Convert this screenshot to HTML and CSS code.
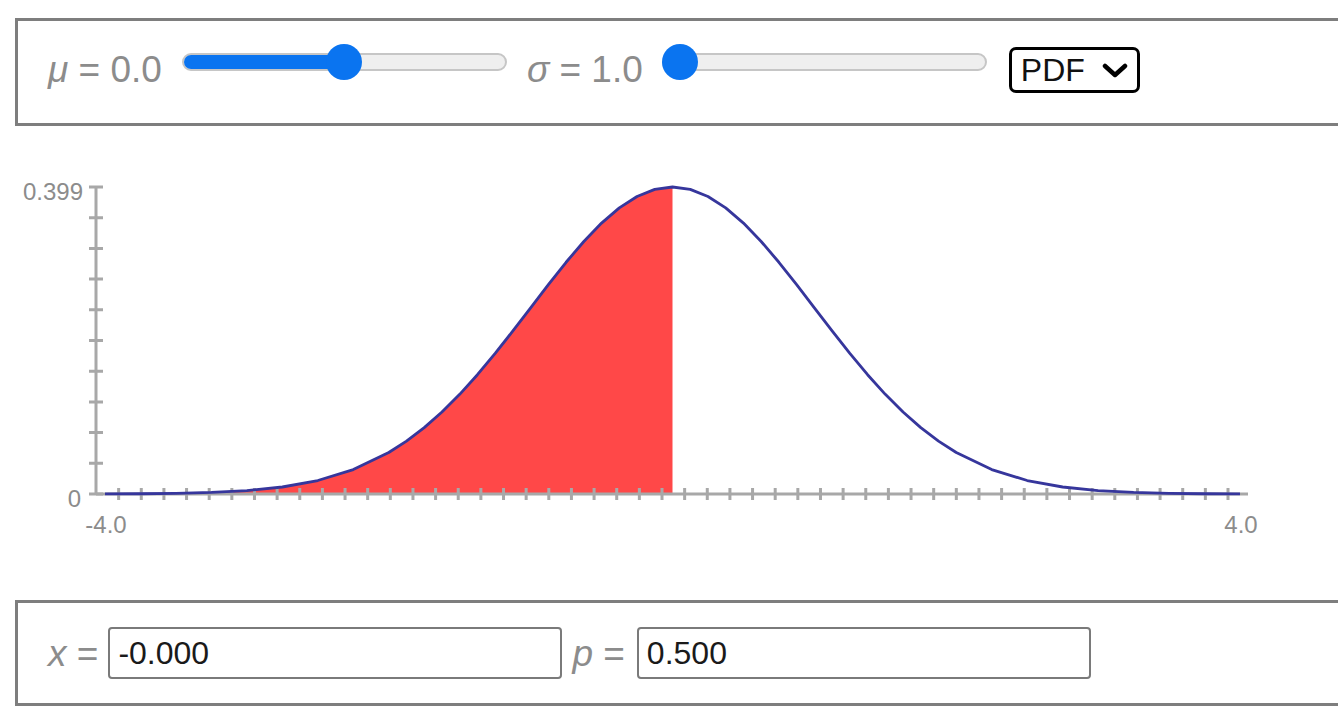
FILE: index.html
```html
<!DOCTYPE html>
<html lang="en">
<head>
<meta charset="utf-8">
<title>Normal distribution</title>
<link rel="stylesheet" href="styles.css">
</head>
<body>
<div class="panel controls">
  <span class="label lab-mu"><i>μ</i> = 0.0</span>
  <div class="slider" role="slider" aria-valuenow="0">
    <div class="track"><div class="fill" style="width:50%"></div></div>
    <div class="thumb" style="left:144.5px"></div>
  </div>
  <span class="label lab-sigma"><i>σ</i> = 1.0</span>
  <div class="slider" role="slider" aria-valuenow="1">
    <div class="track"><div class="fill" style="width:0%"></div></div>
    <div class="thumb" style="left:0px"></div>
  </div>
  <div class="select-wrap">
    <select class="mode">
      <option>PDF</option>
      <option>CDF</option>
    </select>
    <svg class="chev" width="28" height="16" viewBox="0 0 28 16"><path d="M4 3 L14 12 L24 3" fill="none" stroke="#000" stroke-width="4.5" stroke-linecap="round" stroke-linejoin="round"/></svg>
  </div>
</div>

<svg class="chart" width="1338" height="474" viewBox="0 0 1338 474">
  <polygon class="area" points="105,368 105,367.90 140.47,367.73 175.94,367.33 211.41,366.44 246.88,364.59 282.34,361.00 317.81,354.51 353.28,343.58 388.75,326.45 406.48,315.07 424.22,301.61 441.95,286.01 459.69,268.33 477.42,248.71 495.16,227.45 512.89,204.95 530.63,181.80 548.36,158.64 566.09,136.26 583.83,115.47 601.56,97.07 619.30,81.84 637.03,70.45 654.77,63.39 672.5,61 672.5,368"/>
  <line class="axis" x1="96" y1="61" x2="96" y2="368"/>
  <line class="axis" x1="96" y1="368" x2="1248" y2="368"/>
  <path class="tick" d="M89 61H103M89 91.7H103M89 122.4H103M89 153.1H103M89 183.8H103M89 214.5H103M89 245.2H103M89 275.9H103M89 306.6H103M89 337.3H103M89 368H103"/>
  <path class="tick" d="M118.64 362V374M141.28 362V374M163.92 362V374M186.56 362V374M209.2 362V374M231.84 362V374M254.48 362V374M277.12 362V374M299.76 362V374M322.4 362V374M345.04 362V374M367.68 362V374M390.32 362V374M412.96 362V374M435.6 362V374M458.24 362V374M480.88 362V374M503.52 362V374M526.16 362V374M548.8 362V374M571.44 362V374M594.08 362V374M616.72 362V374M639.36 362V374M662 362V374M684.64 362V374M707.28 362V374M729.92 362V374M752.56 362V374M775.2 362V374M797.84 362V374M820.48 362V374M843.12 362V374M865.76 362V374M888.4 362V374M911.04 362V374M933.68 362V374M956.32 362V374M978.96 362V374M1001.6 362V374M1024.24 362V374M1046.88 362V374M1069.52 362V374M1092.16 362V374M1114.8 362V374M1137.44 362V374M1160.08 362V374M1182.72 362V374M1205.36 362V374M1228 362V374"/>
  <polyline class="curve" points="105,367.90 140.47,367.73 175.94,367.33 211.41,366.44 246.88,364.59 282.34,361.00 317.81,354.51 353.28,343.58 388.75,326.45 406.48,315.07 424.22,301.61 441.95,286.01 459.69,268.33 477.42,248.71 495.16,227.45 512.89,204.95 530.63,181.80 548.36,158.64 566.09,136.26 583.83,115.47 601.56,97.07 619.30,81.84 637.03,70.45 654.77,63.39 672.5,61 690.23,63.39 707.97,70.45 725.70,81.84 743.44,97.07 761.17,115.47 778.91,136.26 796.64,158.64 814.38,181.80 832.11,204.95 849.84,227.45 867.58,248.71 885.31,268.33 903.05,286.01 920.78,301.61 938.52,315.07 956.25,326.45 991.72,343.58 1027.19,354.51 1062.66,361.00 1098.13,364.59 1133.59,366.44 1169.06,367.33 1204.53,367.73 1240,367.90"/>
  <text class="axlabel" x="83" y="74" text-anchor="end">0.399</text>
  <text class="axlabel" x="81" y="381" text-anchor="end">0</text>
  <text class="axlabel" x="106" y="407" text-anchor="middle">-4.0</text>
  <text class="axlabel" x="1241" y="407" text-anchor="middle">4.0</text>
</svg>

<div class="panel values">
  <span class="label lab-x"><i>x</i> =</span>
  <input class="field" type="text" value="-0.000">
  <span class="label lab-p"><i>p</i> =</span>
  <input class="field" type="text" value="0.500">
</div>
</body>
</html>
```

FILE: styles.css
```css
html, body {
  margin: 0;
  padding: 0;
  overflow: hidden;
  background: #ffffff;
}

body {
  font-family: "Liberation Sans", Arial, sans-serif;
  width: 1338px;
}

.panel {
  box-sizing: border-box;
  width: 1400px;
  margin-left: 15px;
  border: 3px solid #7e7e7e;
  display: flex;
  align-items: center;
  padding-left: 30px;
}

.controls {
  margin-top: 18px;
  height: 108px;
}

.values {
  height: 106px;
}

.label {
  font-size: 37px;
  color: #8c8c8c;
  white-space: pre;
  line-height: 1;
}

.label i {
  font-style: italic;
}

.controls .label {
  margin-bottom: 6px;
}

.lab-mu {
  margin-right: 20px;
}

.lab-sigma {
  margin-left: 20px;
  margin-right: 19px;
}

.slider {
  position: relative;
  width: 325px;
  height: 36px;
  flex: none;
  margin-bottom: 20px;
}

.track {
  position: absolute;
  left: 0;
  right: 0;
  top: 9px;
  height: 18px;
  box-sizing: border-box;
  border: 2px solid #c6c6c6;
  border-radius: 9px;
  background: #efefef;
  overflow: hidden;
}

.fill {
  position: absolute;
  left: -2px;
  top: -2px;
  bottom: -2px;
  background: #0a74f0;
  border-radius: 9px 0 0 9px;
}

.thumb {
  position: absolute;
  top: 0;
  width: 36px;
  height: 36px;
  border-radius: 50%;
  background: #0a74f0;
}

.select-wrap {
  position: relative;
  margin-left: 22px;
  margin-bottom: 4px;
}

.mode {
  -webkit-appearance: none;
  appearance: none;
  box-sizing: border-box;
  width: 131px;
  height: 46px;
  border: 3px solid #000;
  border-radius: 7px;
  background: #fff;
  padding: 0 0 0 9px;
  margin: 0;
  font-family: "Liberation Sans", Arial, sans-serif;
  font-size: 32px;
  color: #111;
  outline: none;
}

.chev {
  position: absolute;
  right: 11px;
  top: 16px;
  pointer-events: none;
}

.chart {
  display: block;
}

.area {
  fill: #ff4848;
}

.axis {
  stroke: #a8a8a8;
  stroke-width: 3;
}

.tick {
  stroke: #a8a8a8;
  stroke-width: 3;
  fill: none;
}

.curve {
  fill: none;
  stroke: #36369c;
  stroke-width: 2.8;
  stroke-linejoin: round;
}

.axlabel {
  font-family: "Liberation Sans", Arial, sans-serif;
  font-size: 24px;
  fill: #8c8c8c;
}

.lab-x {
  margin-right: 10px;
}

.lab-p {
  margin-left: 10px;
  margin-right: 12px;
}

.field {
  box-sizing: border-box;
  width: 454px;
  height: 52px;
  border: 2px solid #7a7a7a;
  border-radius: 4px;
  padding: 0 8px;
  margin: 0;
  font-family: "Liberation Sans", Arial, sans-serif;
  font-size: 32px;
  color: #1a1a1a;
  background: #fff;
  outline: none;
}
```
